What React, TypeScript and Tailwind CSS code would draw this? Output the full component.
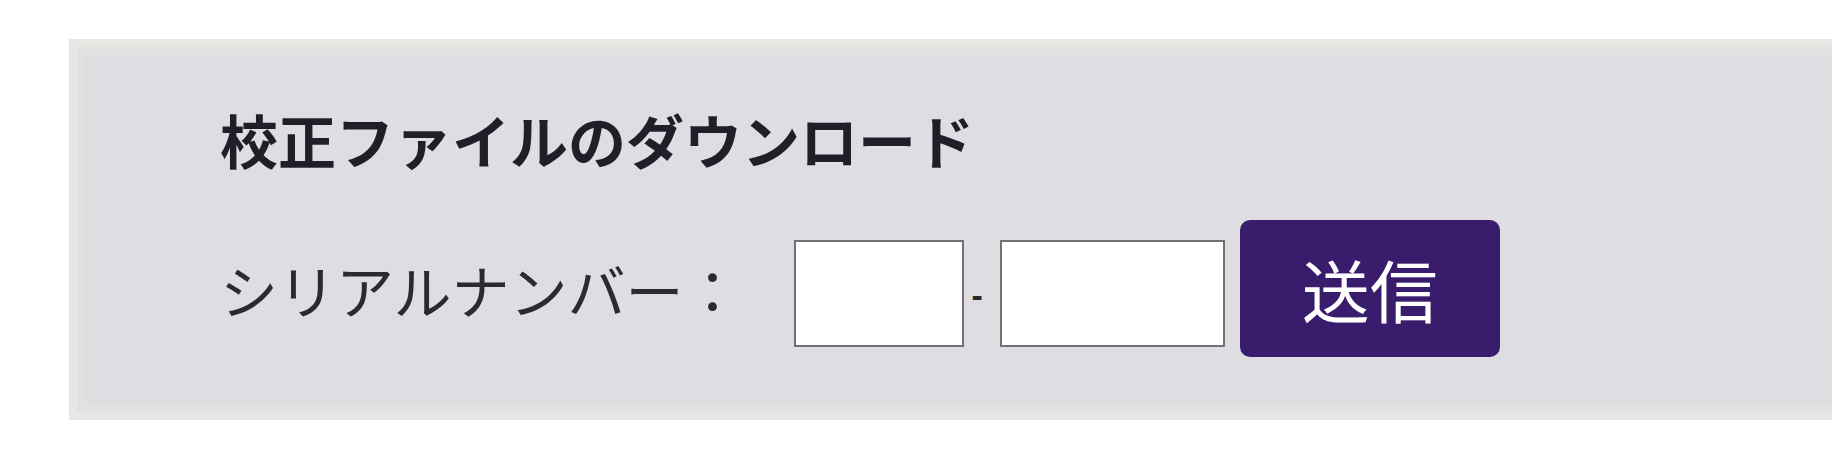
import React from "react";

export default function App() {
  return (
    <div
      className="min-h-screen bg-white pt-[39px]"
      style={{ fontFamily: '"Noto Sans CJK JP", "Noto Sans", sans-serif' }}
    >
      <div className="ml-[69px] bg-[#e8e7e4] pt-[8px] pl-[8px] pb-[9px]">
        <div className="bg-[#e2e1e2] pt-[8px] pl-[8px] pb-[8px]">
          <div className="bg-[#dedde1] pl-[135px] pt-[55px] pb-[46px]">
            <h2 className="text-[58px] leading-none font-bold text-[#211e29]">
              校正ファイルのダウンロード
            </h2>
            <div className="mt-[52px] flex items-center">
              <span className="text-[58px] leading-none text-[#2b2a30]">
                シリアルナンバー：
              </span>
              <input
                type="text"
                aria-label="シリアルナンバー1"
                className="ml-[53px] mt-[10px] h-[107px] w-[170px] border-2 border-[#747175] bg-white outline-none"
              />
              <span
                className="ml-[7px] mt-[12px] text-[34px] font-bold leading-none text-[#2a2a2a]"
                style={{ fontFamily: '"Liberation Sans", Arial, sans-serif' }}
              >
                -
              </span>
              <input
                type="text"
                aria-label="シリアルナンバー2"
                className="ml-[17px] mt-[10px] h-[107px] w-[225px] border-2 border-[#747175] bg-white outline-none"
              />
              <button
                type="button"
                className="ml-[15px] flex h-[137px] w-[260px] items-center justify-center rounded-[10px] bg-[#3a1c6c] text-[68px] leading-none font-normal text-white"
              >
                送信
              </button>
            </div>
          </div>
        </div>
      </div>
    </div>
  );
}
